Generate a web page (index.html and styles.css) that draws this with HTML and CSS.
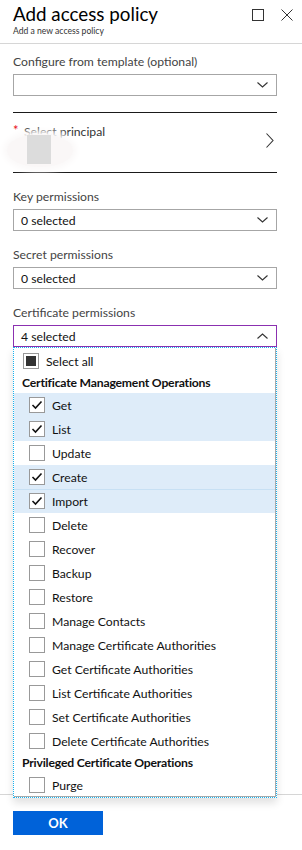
FILE: index.html
```html
<!DOCTYPE html>
<html lang="en">
<head>
<meta charset="utf-8">
<title>Add access policy</title>
<link rel="stylesheet" href="styles.css">
</head>
<body>
<div class="blade">
  <header class="head">
    <div class="titles">
      <h1 class="title">Add access policy</h1>
      <p class="sub">Add a new access policy</p>
    </div>
    <div class="ctrls">
      <svg class="ic" width="12" height="12" viewBox="0 0 12 12"><rect x="0.5" y="0.5" width="11" height="11" fill="none" stroke="#333" stroke-width="1"/></svg>
      <svg class="ic" width="12" height="12" viewBox="0 0 12 12"><path d="M0.5 0.5 L11.5 11.5 M11.5 0.5 L0.5 11.5" fill="none" stroke="#333" stroke-width="1"/></svg>
    </div>
  </header>

  <main class="content">
    <div class="field first">
      <div class="label">Configure from template (optional)</div>
      <div class="select">
        <span class="val"></span>
        <svg class="chev" width="11" height="6" viewBox="0 0 11 6"><path d="M0.5 0.5 L5.5 5 L10.5 0.5" fill="none" stroke="#333" stroke-width="1.1"/></svg>
      </div>
    </div>

    <div class="principal">
      <div class="p-left">
        <span class="req">*</span>
        <span class="p-text">Select principal</span>
      </div>
      <svg class="chev-r" width="8" height="15" viewBox="0 0 8 15"><path d="M0.5 0.5 L7 7.5 L0.5 14.5" fill="none" stroke="#333" stroke-width="1.1"/></svg>
      <div class="blob"><div class="blob-sq"></div></div>
    </div>

    <div class="field">
      <div class="label">Key permissions</div>
      <div class="select">
        <span class="val">0 selected</span>
        <svg class="chev" width="11" height="6" viewBox="0 0 11 6"><path d="M0.5 0.5 L5.5 5 L10.5 0.5" fill="none" stroke="#333" stroke-width="1.1"/></svg>
      </div>
    </div>

    <div class="field">
      <div class="label">Secret permissions</div>
      <div class="select">
        <span class="val">0 selected</span>
        <svg class="chev" width="11" height="6" viewBox="0 0 11 6"><path d="M0.5 0.5 L5.5 5 L10.5 0.5" fill="none" stroke="#333" stroke-width="1.1"/></svg>
      </div>
    </div>

    <div class="field open">
      <div class="label">Certificate permissions</div>
      <div class="select active">
        <span class="val">4 selected</span>
        <svg class="chev" width="11" height="6" viewBox="0 0 11 6"><path d="M0.5 5.5 L5.5 1 L10.5 5.5" fill="none" stroke="#333" stroke-width="1.1"/></svg>
      </div>
      <div class="popup">
        <div class="opt all"><span class="cb"><span class="cb-fill"></span></span><span>Select all</span></div>
        <div class="grp">Certificate Management Operations</div>
        <div class="opt sel"><span class="cb"><svg width="14" height="14" viewBox="0 0 14 14"><path d="M2.5 7 L5.5 10 L11.5 3.5" fill="none" stroke="#111" stroke-width="1.6"/></svg></span><span>Get</span></div>
        <div class="opt sel"><span class="cb"><svg width="14" height="14" viewBox="0 0 14 14"><path d="M2.5 7 L5.5 10 L11.5 3.5" fill="none" stroke="#111" stroke-width="1.6"/></svg></span><span>List</span></div>
        <div class="opt"><span class="cb"></span><span>Update</span></div>
        <div class="opt sel"><span class="cb"><svg width="14" height="14" viewBox="0 0 14 14"><path d="M2.5 7 L5.5 10 L11.5 3.5" fill="none" stroke="#111" stroke-width="1.6"/></svg></span><span>Create</span></div>
        <div class="opt sel split"><span class="cb"><svg width="14" height="14" viewBox="0 0 14 14"><path d="M2.5 7 L5.5 10 L11.5 3.5" fill="none" stroke="#111" stroke-width="1.6"/></svg></span><span>Import</span></div>
        <div class="opt"><span class="cb"></span><span>Delete</span></div>
        <div class="opt"><span class="cb"></span><span>Recover</span></div>
        <div class="opt"><span class="cb"></span><span>Backup</span></div>
        <div class="opt"><span class="cb"></span><span>Restore</span></div>
        <div class="opt"><span class="cb"></span><span>Manage Contacts</span></div>
        <div class="opt"><span class="cb"></span><span>Manage Certificate Authorities</span></div>
        <div class="opt"><span class="cb"></span><span>Get Certificate Authorities</span></div>
        <div class="opt"><span class="cb"></span><span>List Certificate Authorities</span></div>
        <div class="opt"><span class="cb"></span><span>Set Certificate Authorities</span></div>
        <div class="opt"><span class="cb"></span><span>Delete Certificate Authorities</span></div>
        <div class="grp">Privileged Certificate Operations</div>
        <div class="opt"><span class="cb"></span><span>Purge</span></div>
      </div>
    </div>
  </main>

  <footer class="foot">
    <button class="ok" type="button">OK</button>
  </footer>
</div>
</body>
</html>
```

FILE: styles.css
```css
* { box-sizing: border-box; }
html, body { margin: 0; padding: 0; background: #fff; }
body {
  font-family: Lato, "Noto Sans", sans-serif;
  font-size: 12.2px;
  color: #1e1e1e;
}
.blade {
  width: 302px;
  height: 850px;
  display: flex;
  flex-direction: column;
}
.head {
  display: flex;
  justify-content: space-between;
  align-items: flex-start;
  padding: 2px 9px 6px 13px;
  border-bottom: 1px solid #d6d6d6;
}
.title {
  margin: 0;
  font-size: 18.8px;
  font-weight: 400;
  line-height: 24px;
  color: #000;
}
.sub {
  margin: 0;
  font-size: 8.6px;
  line-height: 11px;
  color: #333;
}
.ctrls {
  display: flex;
  gap: 17px;
  margin-top: 7px;
}
.ic { display: block; }
.content {
  flex: 1;
  padding: 9px 25px 0 13px;
}
.field { margin-top: 15px; position: relative; }
.field.first { margin-top: 0; }
.label {
  line-height: 18px;
  margin-bottom: 3px;
  color: #444;
}
.select {
  height: 22px;
  border: 1px solid #a6a6a6;
  display: flex;
  align-items: center;
  justify-content: space-between;
  padding: 0 8px 0 7px;
  color: #111;
}
.select.active { border-color: #8b30b0; }
.chev { display: block; }
.principal {
  position: relative;
  margin-top: 16px;
  height: 61px;
  border-top: 1px solid #1a1a1a;
  border-bottom: 1px solid #1a1a1a;
  display: flex;
  align-items: center;
  justify-content: space-between;
  padding: 0 3px 0 0;
}
.p-left {
  align-self: flex-start;
  margin-top: 10px;
  display: flex;
  align-items: flex-start;
}
.req { color: #e81123; font-size: 13px; line-height: 14px; width: 11px; }
.p-text { line-height: 18px; color: #333; }
.chev-r { display: block; margin-top: -4px; }
.blob {
  position: absolute;
  left: -6px;
  top: 21px;
  width: 66px;
  height: 33px;
  border-radius: 50%;
  background: #faf7f7;
  box-shadow: 0 0 6px 4px #fbf9f9;
}
.blob-sq {
  position: absolute;
  left: 20px;
  top: 1px;
  width: 24px;
  height: 29px;
  background: #dcdcdc;
}
.popup {
  position: absolute;
  top: 100%;
  left: 0;
  width: 264px;
  background: #fff;
  border: 1px dotted #17b3f0;
  box-shadow: inset -1px 0 0 #a9a9a9, inset 0 -1px 0 #a9a9a9, 0 5px 8px rgba(0,0,0,0.12);
  padding: 1px 1px 0 0;
  z-index: 2;
}
.opt {
  height: 24px;
  display: flex;
  align-items: center;
  padding-left: 15px;
  gap: 7px;
  color: #111;
}
.opt.all { padding-left: 9px; }
.opt.sel { background: #deecf9; }
.opt.split { box-shadow: inset 0 1px 0 #c7e0f4; }
.cb {
  width: 16px;
  height: 16px;
  border: 1px solid #999;
  background: #fff;
  display: flex;
  align-items: center;
  justify-content: center;
  flex: none;
}
.cb svg { display: block; }
.cb-fill { width: 10px; height: 10px; background: #333; }
.grp {
  height: 20px;
  line-height: 20px;
  padding-left: 8px;
  font-weight: 700;
  letter-spacing: -0.2px;
  color: #111;
}
.foot {
  border-top: 1px solid #d6d6d6;
  padding: 16px 13px 15px;
}
.ok {
  display: block;
  width: 90px;
  height: 24px;
  border: 0;
  background: #0062d9;
  color: #fff;
  font-family: inherit;
  font-size: 13px;
  font-weight: 700;
  padding: 0;
}
```
